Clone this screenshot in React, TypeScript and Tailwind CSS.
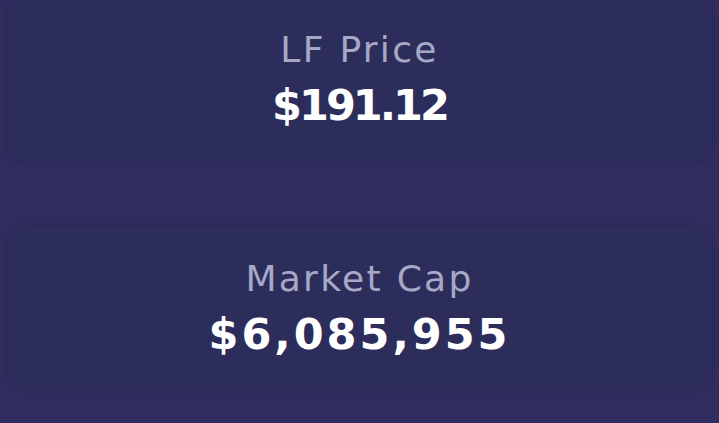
import React from 'react';

type StatCardProps = {
  label: string;
  value: string;
  className?: string;
  valueClassName?: string;
};

const StatCard = ({ label, value, className, valueClassName }: StatCardProps) => (
  <div
    className={`flex flex-col items-center justify-center rounded-[18px] bg-[#2c2d5b] shadow-[0_0_10px_rgba(20,18,50,0.3)] ${className ?? ''}`}
  >
    <span className="text-[36px] leading-[40px] tracking-[2.3px] text-[#a7a8c6] font-['DejaVu_Sans',sans-serif]">
      {label}
    </span>
    <span
      className={`mt-[12px] text-[43px] leading-[46px] font-bold text-white font-['DejaVu_Sans',sans-serif] ${valueClassName ?? ''}`}
    >
      {value}
    </span>
  </div>
);

export default function App() {
  return (
    <div className="h-[423px] w-full overflow-hidden bg-[#302e60]">
      <div className="flex flex-col gap-[66px] px-2">
        <StatCard
          label="LF Price"
          value="$191.12"
          className="-mt-[4px] h-[165px]"
          valueClassName="tracking-[-3px]"
        />
        <StatCard
          label="Market Cap"
          value="$6,085,955"
          className="h-[161px]"
          valueClassName="tracking-[3px]"
        />
      </div>
    </div>
  );
}
